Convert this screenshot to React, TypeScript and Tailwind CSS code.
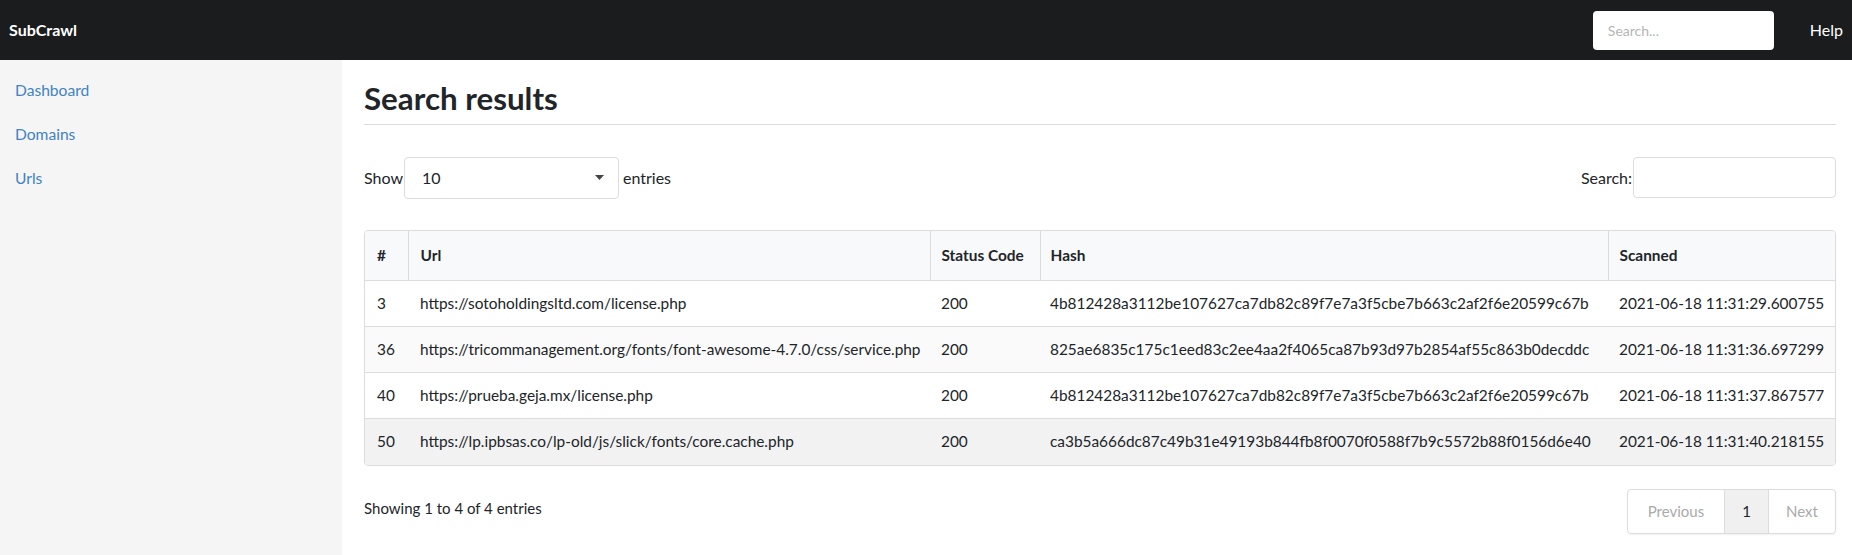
import React from "react";

const rows = [
  { id: "3", url: "https://sotoholdingsltd.com/license.php", code: "200", hash: "4b812428a3112be107627ca7db82c89f7e7a3f5cbe7b663c2af2f6e20599c67b", scanned: "2021-06-18 11:31:29.600755", bg: "bg-white" },
  { id: "36", url: "https://tricommanagement.org/fonts/font-awesome-4.7.0/css/service.php", code: "200", hash: "825ae6835c175c1eed83c2ee4aa2f4065ca87b93d97b2854af55c863b0decddc", scanned: "2021-06-18 11:31:36.697299", bg: "bg-[#fafafa]" },
  { id: "40", url: "https://prueba.geja.mx/license.php", code: "200", hash: "4b812428a3112be107627ca7db82c89f7e7a3f5cbe7b663c2af2f6e20599c67b", scanned: "2021-06-18 11:31:37.867577", bg: "bg-white" },
  { id: "50", url: "https://lp.ipbsas.co/lp-old/js/slick/fonts/core.cache.php", code: "200", hash: "ca3b5a666dc87c49b31e49193b844fb8f0070f0588f7b9c5572b88f0156d6e40", scanned: "2021-06-18 11:31:40.218155", bg: "bg-[#f2f2f2]" },
];

export default function App() {
  return (
    <div className="min-h-[555px] flex flex-col text-[16px] text-[#212529]" style={{ fontFamily: "Lato, 'Noto Sans', sans-serif" }}>
      <header className="h-[60px] bg-[#1b1c1e] flex items-center pl-[9px] pr-[9px]">
        <div className="text-white font-bold text-[16px]">SubCrawl</div>
        <div className="flex-1" />
        <input
          placeholder="Search..."
          className="w-[181px] h-[39px] rounded-[4px] bg-white px-[15px] text-[14px] placeholder:text-[#b5b5b5] outline-none"
        />
        <a className="ml-[36px] text-white text-[16px]">Help</a>
      </header>
      <div className="flex flex-1">
        <aside className="w-[342px] bg-[#f5f5f5] min-h-[495px] pt-[9px]">
          <nav className="flex flex-col">
            <a className="px-[15px] h-[44px] flex items-center text-[#4183c4] text-[15.6px]">Dashboard</a>
            <a className="px-[15px] h-[44px] flex items-center text-[#4183c4] text-[15.6px]">Domains</a>
            <a className="px-[15px] h-[44px] flex items-center text-[#4183c4] text-[15.6px]">Urls</a>
          </nav>
        </aside>
        <main className="flex-1 pl-[22px] pr-[16px]">
          <h1 className="text-[31.3px] font-bold leading-[1.2] pt-[20px] pb-[6px] border-b border-[#dcdcdc]">Search results</h1>
          <div className="flex items-center justify-between mt-[32px]">
            <div className="flex items-center">
              <span>Show</span>
              <div className="ml-[1px] w-[215px] h-[42px] border border-[#dcdcdc] rounded-[4px] flex items-center justify-between pl-[17px] pr-[14px]">
                <span>10</span>
                <svg width="9" height="5" viewBox="0 0 9 5"><path d="M0 0h9L4.5 5z" fill="#444" /></svg>
              </div>
              <span className="ml-[4px]">entries</span>
            </div>
            <div className="flex items-center">
              <span>Search:</span>
              <input className="ml-[1px] w-[203px] h-[41px] border border-[#dcdcdc] rounded-[4px] outline-none" />
            </div>
          </div>
          <div className="mt-[31px] border border-[#dcdcdc] rounded-[4px] overflow-hidden">
            <table className="w-full border-collapse text-left text-[15.4px]">
              <thead>
                <tr className="bg-[#f8f9fa] h-[50px]">
                  <th className="w-[43px] pl-[12px] font-bold border-r border-[#dcdcdc]">#</th>
                  <th className="w-[522px] pl-[12px] font-bold border-r border-[#dcdcdc]">Url</th>
                  <th className="w-[110px] pl-[11px] font-bold border-r border-[#dcdcdc]">Status Code</th>
                  <th className="w-[568px] pl-[10px] font-bold border-r border-[#dcdcdc]">Hash</th>
                  <th className="pl-[11px] font-bold">Scanned</th>
                </tr>
              </thead>
              <tbody>
                {rows.map((r) => (
                  <tr key={r.id} className={`${r.bg} h-[46px] border-t border-[#dcdcdc]`}>
                    <td className="pl-[12px]">{r.id}</td>
                    <td className="pl-[12px] whitespace-nowrap">{r.url}</td>
                    <td className="pl-[11px]">{r.code}</td>
                    <td className="pl-[10px] whitespace-nowrap">{r.hash}</td>
                    <td className="pl-[11px] whitespace-nowrap">{r.scanned}</td>
                  </tr>
                ))}
              </tbody>
            </table>
          </div>
          <div className="flex justify-between items-start mt-[31px]">
            <div className="text-[15px] pt-[0px]">Showing 1 to 4 of 4 entries</div>
            <div className="flex h-[45px] border border-[#dcdcdc] rounded-[4px] overflow-hidden text-[15px] mt-[-8px] shadow-[0_1px_2px_rgba(0,0,0,0.06)]">
              <span className="w-[97px] flex items-center justify-center text-[#aaaaaa] border-r border-[#dcdcdc]">Previous</span>
              <span className="w-[44px] flex items-center justify-center bg-[#f0f0f0] border-r border-[#dcdcdc]">1</span>
              <span className="w-[66px] flex items-center justify-center text-[#aaaaaa]">Next</span>
            </div>
          </div>
        </main>
      </div>
    </div>
  );
}
